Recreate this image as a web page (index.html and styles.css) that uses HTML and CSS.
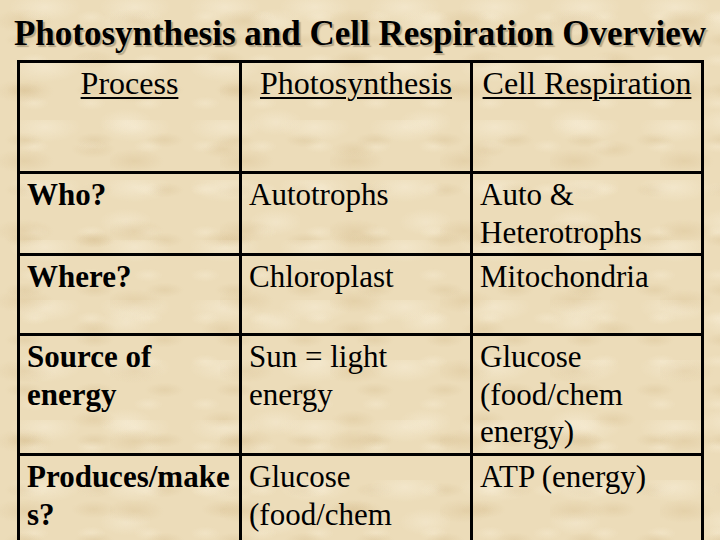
FILE: index.html
```html
<!DOCTYPE html>
<html lang="en">
<head>
<meta charset="utf-8">
<title>Photosynthesis and Cell Respiration Overview</title>
<link rel="stylesheet" href="styles.css">
</head>
<body>
<main class="slide">
  <h1 class="title">Photosynthesis and Cell Respiration Overview</h1>
  <div class="grid">
    <div class="cell head"><span class="u">Process</span></div>
    <div class="cell head"><span class="u">Photosynthesis</span></div>
    <div class="cell head"><span class="u">Cell Respiration</span></div>

    <div class="cell key">Who?</div>
    <div class="cell">Autotrophs</div>
    <div class="cell">Auto &amp; Heterotrophs</div>

    <div class="cell key">Where?</div>
    <div class="cell">Chloroplast</div>
    <div class="cell">Mitochondria</div>

    <div class="cell key">Source of energy</div>
    <div class="cell">Sun = light energy</div>
    <div class="cell">Glucose (food/chem energy)</div>

    <div class="cell key"><span class="nowrap">Produces/make</span><br>s?</div>
    <div class="cell">Glucose (food/chem energy)</div>
    <div class="cell">ATP (energy)</div>
  </div>
</main>
</body>
</html>
```

FILE: styles.css
```css
html, body {
  margin: 0;
  padding: 0;
}

body {
  width: 720px;
  height: 540px;
  overflow: hidden;
  background-color: #ecdcb9;
  background-image:
    radial-gradient(ellipse 40px 16px at 22% 30%, rgba(214, 188, 140, 0.35), transparent 75%),
    radial-gradient(ellipse 30px 12px at 72% 66%, rgba(214, 188, 140, 0.32), transparent 75%),
    radial-gradient(ellipse 48px 20px at 50% 12%, rgba(250, 242, 222, 0.45), transparent 75%),
    radial-gradient(ellipse 36px 18px at 84% 22%, rgba(250, 242, 222, 0.4), transparent 75%),
    radial-gradient(ellipse 26px 10px at 35% 80%, rgba(208, 182, 134, 0.28), transparent 75%),
    radial-gradient(ellipse 20px 9px at 60% 40%, rgba(248, 238, 214, 0.4), transparent 75%);
  background-size: 110px 70px, 130px 90px, 90px 60px, 150px 100px, 70px 50px, 57px 43px;
  font-family: "Liberation Serif", "Times New Roman", serif;
  color: #000;
}

.slide {
  display: flex;
  flex-direction: column;
}

.title {
  margin: 0 0 6px 0;
  padding-top: 14px;
  font-size: 35px;
  line-height: 40px;
  font-weight: bold;
  text-align: center;
  white-space: nowrap;
  text-shadow: 2px 2px 1px rgba(130, 116, 90, 0.5);
}

.grid {
  display: grid;
  grid-template-columns: 222px 231px 231px;
  grid-template-rows: 111px 82px 80px 120px 100px;
  margin-left: 17px;
  width: max-content;
  border-top: 3px solid #000;
  border-left: 3px solid #000;
}

.cell {
  box-sizing: border-box;
  border-right: 3px solid #000;
  border-bottom: 3px solid #000;
  padding: 2px 7px 0 7px;
  font-size: 31px;
  line-height: 37.5px;
}

.head {
  text-align: center;
  font-size: 32px;
  white-space: nowrap;
}

.u {
  text-decoration: underline;
  text-decoration-thickness: 2px;
  text-underline-offset: 3px;
}

.key {
  font-weight: bold;
}

.nowrap {
  white-space: nowrap;
}
```
